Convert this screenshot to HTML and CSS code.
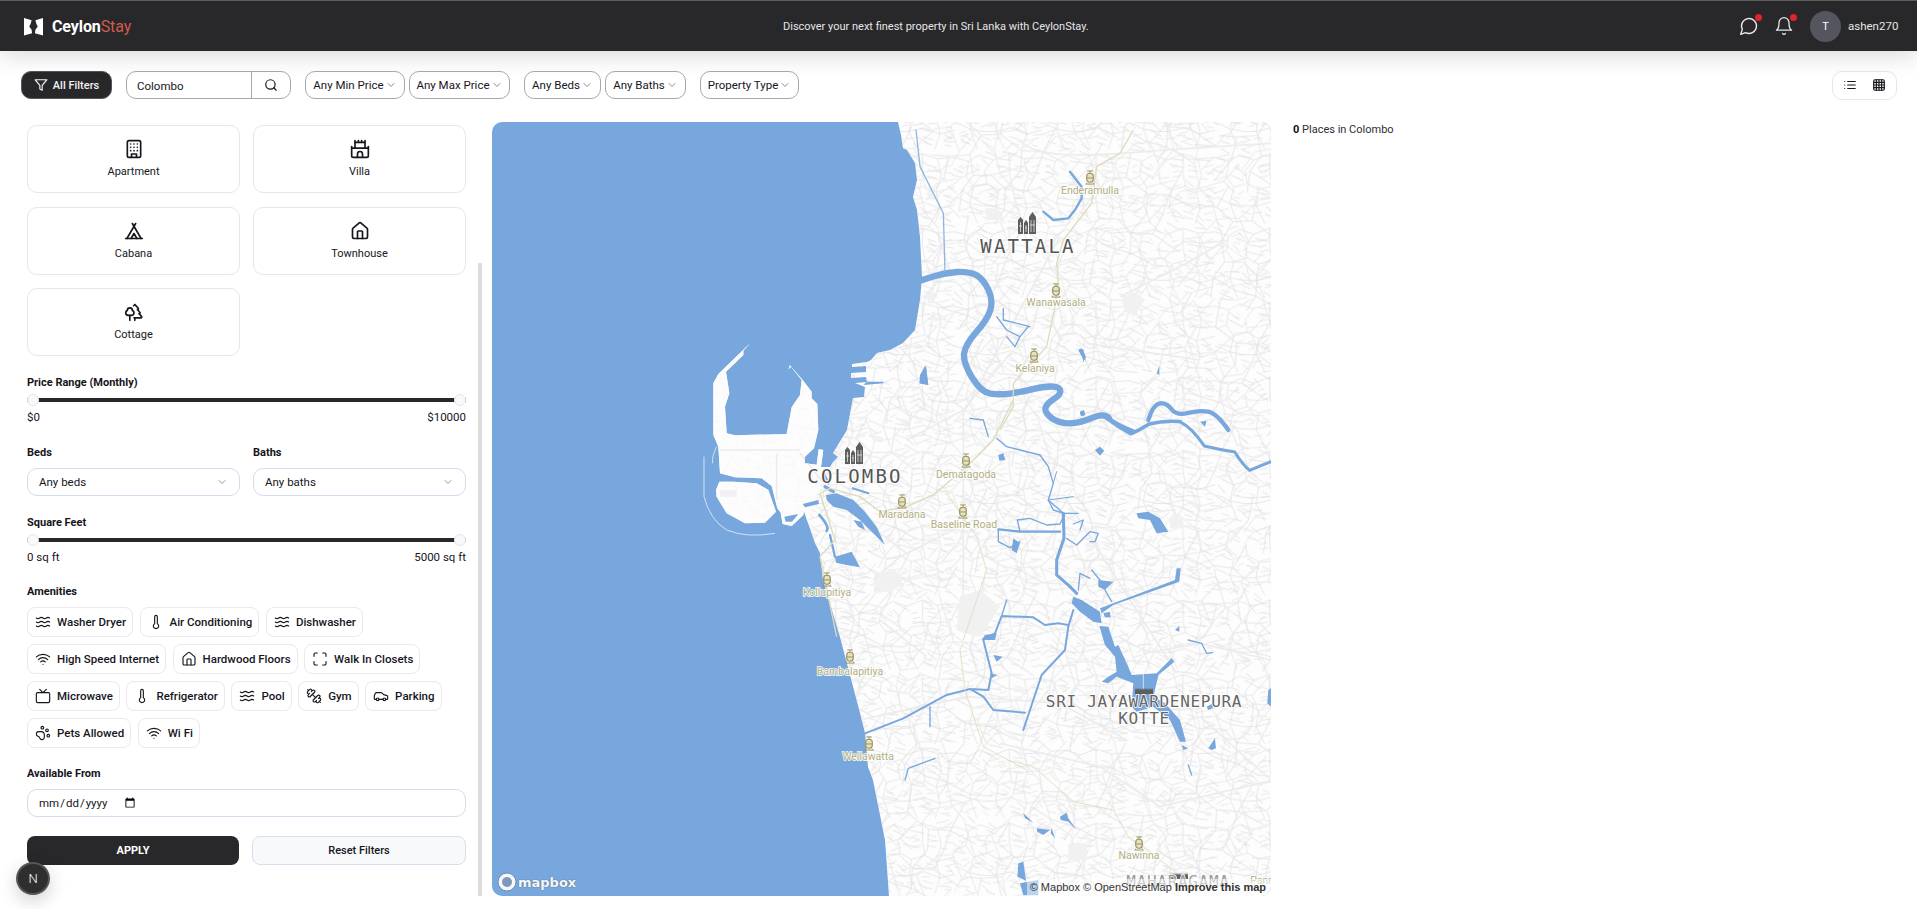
FILE: index.html
```html
<!DOCTYPE html>
<html lang="en">
<head>
<meta charset="utf-8">
<title>CeylonStay</title>
<link rel="stylesheet" href="styles.css">
</head>
<body>
<svg class="sprites" aria-hidden="true">
  <symbol id="i-waves" viewBox="0 0 24 24"><path d="M2 6c.6.5 1.2 1 2.5 1C7 7 7 5 9.5 5c2.6 0 2.4 2 5 2 2.5 0 2.5-2 5-2 1.3 0 1.9.5 2.5 1"/><path d="M2 12c.6.5 1.2 1 2.5 1 2.5 0 2.5-2 5-2 2.6 0 2.4 2 5 2 2.5 0 2.5-2 5-2 1.3 0 1.9.5 2.5 1"/><path d="M2 18c.6.5 1.2 1 2.5 1 2.5 0 2.5-2 5-2 2.6 0 2.4 2 5 2 2.5 0 2.5-2 5-2 1.3 0 1.9.5 2.5 1"/></symbol>
  <symbol id="i-thermo" viewBox="0 0 24 24"><path d="M14 4v10.54a4 4 0 1 1-4 0V4a2 2 0 0 1 4 0Z"/></symbol>
  <symbol id="i-wifi" viewBox="0 0 24 24"><path d="M12 20h.01"/><path d="M2 8.82a15 15 0 0 1 20 0"/><path d="M5 12.859a10 10 0 0 1 14 0"/><path d="M8.5 16.429a5 5 0 0 1 7 0"/></symbol>
  <symbol id="i-house" viewBox="0 0 24 24"><path d="M15 21v-8a1 1 0 0 0-1-1h-4a1 1 0 0 0-1 1v8"/><path d="M3 10a2 2 0 0 1 .709-1.528l7-5.999a2 2 0 0 1 2.582 0l7 5.999A2 2 0 0 1 21 10v9a2 2 0 0 1-2 2H5a2 2 0 0 1-2-2z"/></symbol>
  <symbol id="i-max" viewBox="0 0 24 24"><path d="M8 3H5a2 2 0 0 0-2 2v3"/><path d="M21 8V5a2 2 0 0 0-2-2h-3"/><path d="M3 16v3a2 2 0 0 0 2 2h3"/><path d="M16 21h3a2 2 0 0 0 2-2v-3"/></symbol>
  <symbol id="i-tv" viewBox="0 0 24 24"><rect x="2" y="7" width="20" height="15" rx="2"/><path d="m17 2-5 5-5-5"/></symbol>
  <symbol id="i-gym" viewBox="0 0 24 24"><path d="M14.4 14.4 9.6 9.6"/><path d="M18.657 21.485a2 2 0 1 1-2.829-2.828l-1.767 1.768a2 2 0 1 1-2.829-2.829l6.364-6.364a2 2 0 1 1 2.829 2.829l-1.768 1.767a2 2 0 1 1 2.828 2.829z"/><path d="m21.5 21.5-1.4-1.4"/><path d="M3.9 3.9 2.5 2.5"/><path d="M6.404 12.768a2 2 0 1 1-2.829-2.829l1.768-1.767a2 2 0 1 1-2.828-2.829l2.828-2.828a2 2 0 1 1 2.829 2.828l1.767-1.768a2 2 0 1 1 2.829 2.829z"/></symbol>
  <symbol id="i-car" viewBox="0 0 24 24"><path d="M19 17h2c.6 0 1-.4 1-1v-3c0-.9-.7-1.7-1.5-1.9C18.7 10.6 16 10 16 10s-1.3-1.4-2.2-2.3c-.5-.4-1.1-.7-1.8-.7H5c-.6 0-1.1.4-1.4.9l-1.4 2.9A3.7 3.7 0 0 0 2 12v4c0 .6.4 1 1 1h2"/><circle cx="7" cy="17" r="2"/><path d="M9 17h6"/><circle cx="17" cy="17" r="2"/></symbol>
  <symbol id="i-paw" viewBox="0 0 24 24"><circle cx="11" cy="4" r="2"/><circle cx="18" cy="8" r="2"/><circle cx="20" cy="16" r="2"/><path d="M9 10a5 5 0 0 1 5 5v3.5a3.5 3.5 0 0 1-6.84 1.045Q6.52 17.48 4.46 16.84A3.5 3.5 0 0 1 5.5 10Z"/></symbol>
  <symbol id="i-chev" viewBox="0 0 24 24"><path d="m6 9 6 6 6-6"/></symbol>
  <symbol id="i-building" viewBox="0 0 24 24"><rect x="4" y="2" width="16" height="20" rx="2"/><path d="M9 22v-4h6v4"/><path d="M8 6h.01M12 6h.01M16 6h.01M8 10h.01M12 10h.01M16 10h.01M8 14h.01M12 14h.01M16 14h.01"/></symbol>
  <symbol id="i-castle" viewBox="0 0 24 24"><path d="M22 20v-9H2v9a2 2 0 0 0 2 2h16a2 2 0 0 0 2-2Z"/><path d="M18 11V4H6v7"/><path d="M15 22v-4a3 3 0 0 0-3-3a3 3 0 0 0-3 3v4"/><path d="M22 11V9"/><path d="M2 11V9"/><path d="M6 4V2"/><path d="M18 4V2"/><path d="M10 4V2"/><path d="M14 4V2"/></symbol>
  <symbol id="i-tent" viewBox="0 0 24 24"><path d="M3.5 21 14 3"/><path d="M20.5 21 10 3"/><path d="M15.5 21 12 15l-3.5 6"/><path d="M2 21h20"/></symbol>
  <symbol id="i-trees" viewBox="0 0 24 24"><path d="M10 10v.2A3 3 0 0 1 8.9 16H5a3 3 0 0 1-1-5.8V10a3 3 0 0 1 6 0Z"/><path d="M7 16v6"/><path d="M13 19v3"/><path d="M12 19h8.3a1 1 0 0 0 .7-1.7L18 14h.3a1 1 0 0 0 .7-1.7L16 9h.2a1 1 0 0 0 .8-1.7L13 3l-1.4 1.5"/></symbol>
  <symbol id="tram" viewBox="0 0 12 16"><path class="tram-line" d="M3 1h6M6 1v2M2.5 13.5 1.500 15.500M9.500 13.500l1 2M2 15h8"/><rect class="tram-body" x="2.500" y="3.500" width="7" height="9.500" rx="3.200"/><path class="tram-band" d="M2.500 8.500h7"/></symbol>
  <symbol id="city" viewBox="0 0 19 22"><path class="city-fill" d="M0 22V8l2.500-3L5 8v14zM6 22V11l2-3 2 3v11zM11 22V5l3.500-5L18 5v17z"/><path class="city-win" d="M2.500 10v10M8 13v7M13 8v12M16 8v12M1 14h3M7 16h2M12 13h5"/></symbol>
  <symbol id="factory" viewBox="0 0 18 6"><path class="city-fill" d="M0 6V2l1-2 1 2 1-2 1 2 1-2 1 2 1-2 1 2 1-2 1 2 1-2 1 2 1-2 1 2 1-2 1 2 1-2 1 2v4z"/></symbol>
</svg>

<header class="topbar">
  <a class="brand">
    <svg class="brand-mark" viewBox="0 0 20 20"><path d="M0 1l8 2.500L7 7 5.500 10 8 13.500 8.500 17 0 19.500zM20 1l-8 2.500L13 7l1.500 3L12 13.500 11.500 17l8.500 2.500z"/></svg>
    <span class="brand-name">Ceylon<span class="brand-accent">Stay</span></span>
  </a>
  <p class="tagline">Discover your next finest property in Sri Lanka with CeylonStay.</p>
  <div class="user-area">
    <span class="notify"><svg class="ic ic-20" viewBox="0 0 24 24"><path d="M7.900 20A9 9 0 1 0 4 16.100L2 22Z"/></svg><i class="dot"></i></span>
    <span class="notify"><svg class="ic ic-20" viewBox="0 0 24 24"><path d="M6 8a6 6 0 0 1 12 0c0 7 3 9 3 9H3s3-2 3-9"/><path d="M10.300 21a1.940 1.940 0 0 0 3.400 0"/></svg><i class="dot"></i></span>
    <span class="avatar">T</span>
    <span class="username">ashen270</span>
  </div>
</header>

<section class="toolbar">
  <button class="all-filters"><svg class="ic ic-14" viewBox="0 0 24 24"><path d="M22 3H2l8 9.460V19l4 2v-8.540z"/></svg>All Filters</button>
  <div class="search"><span class="search-text">Colombo</span><span class="search-btn"><svg class="ic ic-14" viewBox="0 0 24 24"><circle cx="11" cy="11" r="8"/><path d="m21 21-4.300-4.300"/></svg></span></div>
  <div class="pill-group">
    <button class="pill pill-min">Any Min Price<svg class="ic chev"><use href="#i-chev"/></svg></button>
    <button class="pill pill-max">Any Max Price<svg class="ic chev"><use href="#i-chev"/></svg></button>
  </div>
  <div class="pill-group">
    <button class="pill pill-beds">Any Beds<svg class="ic chev"><use href="#i-chev"/></svg></button>
    <button class="pill pill-baths">Any Baths<svg class="ic chev"><use href="#i-chev"/></svg></button>
  </div>
  <button class="pill pill-type">Property Type<svg class="ic chev"><use href="#i-chev"/></svg></button>
  <div class="view-toggle">
    <svg class="ic ic-14" viewBox="0 0 24 24"><path d="M3 6h.01M3 12h.01M3 18h.01M8 6h13M8 12h13M8 18h13"/></svg>
    <svg class="ic ic-14" viewBox="0 0 24 24"><rect x="3" y="3" width="18" height="18" rx="2"/><path d="M3 7.500h18M3 12h18M3 16.500h18M7.500 3v18M12 3v18M16.500 3v18"/></svg>
  </div>
</section>

<main class="content">
  <aside class="sidebar">
    <div class="scrollbar"></div>
    <div class="types">
      <button class="type-card"><svg class="ic ic-20"><use href="#i-building"/></svg>Apartment</button>
      <button class="type-card"><svg class="ic ic-20"><use href="#i-castle"/></svg>Villa</button>
      <button class="type-card"><svg class="ic ic-20"><use href="#i-tent"/></svg>Cabana</button>
      <button class="type-card"><svg class="ic ic-20"><use href="#i-house"/></svg>Townhouse</button>
      <button class="type-card"><svg class="ic ic-20"><use href="#i-trees"/></svg>Cottage</button>
    </div>

    <h3 class="label label-section">Price Range (Monthly)</h3>
    <div class="slider"><i class="thumb"></i><i class="thumb"></i></div>
    <div class="range-values"><span>$0</span><span>$10000</span></div>

    <div class="two-col section-gap">
      <div><h3 class="label">Beds</h3><div class="select"><span>Any beds</span><svg class="ic chev select-chev"><use href="#i-chev"/></svg></div></div>
      <div><h3 class="label">Baths</h3><div class="select"><span>Any baths</span><svg class="ic chev select-chev"><use href="#i-chev"/></svg></div></div>
    </div>

    <h3 class="label label-section">Square Feet</h3>
    <div class="slider"><i class="thumb"></i><i class="thumb"></i></div>
    <div class="range-values"><span>0 sq ft</span><span>5000 sq ft</span></div>

    <h3 class="label label-section">Amenities</h3>
    <div class="chips">
      <div class="chip-row">
        <span class="chip"><svg class="ic ic-16"><use href="#i-waves"/></svg>Washer Dryer</span>
        <span class="chip"><svg class="ic ic-16"><use href="#i-thermo"/></svg>Air Conditioning</span>
        <span class="chip"><svg class="ic ic-16"><use href="#i-waves"/></svg>Dishwasher</span>
      </div>
      <div class="chip-row">
        <span class="chip"><svg class="ic ic-16"><use href="#i-wifi"/></svg>High Speed Internet</span>
        <span class="chip"><svg class="ic ic-16"><use href="#i-house"/></svg>Hardwood Floors</span>
        <span class="chip"><svg class="ic ic-16"><use href="#i-max"/></svg>Walk In Closets</span>
      </div>
      <div class="chip-row">
        <span class="chip"><svg class="ic ic-16"><use href="#i-tv"/></svg>Microwave</span>
        <span class="chip"><svg class="ic ic-16"><use href="#i-thermo"/></svg>Refrigerator</span>
        <span class="chip"><svg class="ic ic-16"><use href="#i-waves"/></svg>Pool</span>
        <span class="chip"><svg class="ic ic-16"><use href="#i-gym"/></svg>Gym</span>
        <span class="chip"><svg class="ic ic-16"><use href="#i-car"/></svg>Parking</span>
      </div>
      <div class="chip-row">
        <span class="chip"><svg class="ic ic-16"><use href="#i-paw"/></svg>Pets Allowed</span>
        <span class="chip"><svg class="ic ic-16"><use href="#i-wifi"/></svg>Wi Fi</span>
      </div>
    </div>

    <h3 class="label label-section label-date">Available From</h3>
    <input class="date" type="date">

    <div class="two-col actions">
      <button class="btn-apply">APPLY</button>
      <button class="btn-reset">Reset Filters</button>
    </div>
  </aside>

  <section class="map">
    <svg class="map-svg" viewBox="492 122 779 774" role="img" aria-label="Map of Colombo">
      <defs>
        <path id="land-main" d="M898 122L901 135 903 148 907 150 915 163 917 180 913 197 917 210 920 237 922 277 920 300 915 330 903 343 890 350 877 353 871 360 867 362 852 364 852 367 866 366 866 372 851 373 851 378 866 377 867 382 855 383 865 387 864 397 853 398 847 430 833 453 838 457 833 462 830 467 818 467 802 505 807 520 815 543 820 553 823 580 840 637 860 713 865 733 868 767 873 780 885 840 889 896H1271V122Z"/>
        <path id="port" d="M182 38L160 62 160 75 108 125 118 190 105 230 110 310 135 316 290 312 305 232 330 195 335 150 303 110 295 118 300 106 338 150 365 185 365 205 382 222 385 300 372 355 345 380 345 400 380 404 386 358 400 360 393 412 400 470 345 525 272 548 262 535 245 468 215 445 135 442 90 430 85 350 70 315 70 160 85 132ZM88 455L130 455 200 460 235 480 258 545 225 578 165 580 110 550 80 500 78 480ZM272 548L278 582 305 588 340 555 345 525Z"/>
        <clipPath id="land-clip">
          <use href="#land-main"/>
          <use href="#port" transform="translate(690 330) scale(.3333)"/>
        </clipPath>
        <pattern id="streets-a" width="140" height="120" patternUnits="userSpaceOnUse" patternTransform="scale(.62)">
          <path class="street" d="M0 14L22 20 40 10 62 18 88 8 112 16 140 14M22 20L18 44 30 62 24 88 36 120M18 44L4 50 0 48M30 62L52 56 70 66 92 60 110 70 140 62M52 56L48 36 62 18M70 66L66 92 80 120M92 60L88 38 88 8M110 70L116 96 108 120M112 16L118 42 110 70M24 88L46 92 66 92 90 86 116 96 140 90M0 78L12 82 24 88M6 30l8-4M6 36l9 3M30 30l10 4M34 24l6 6M44 44l8-4M70 30l10-3M72 38l12-3M72 46l14-3M96 26l14 4M96 34l18 3M96 44l14 3M36 74l10-6M40 80l-10-2M56 76l8 3M54 84l10-3M76 74l10 4M74 82l14-2M94 72l12 4M96 80l14-1M124 78l10-3M126 84l10 2M124 30l12-4M124 38l14 2M128 50l-10-2M8 100l14-4M10 108l14 4M42 100l16 6M44 108l10 8M62 104l14-2M88 100l18 6M90 110l14 4M122 106l14-4M124 114l10 2"/>
        </pattern>
        <pattern id="streets-b" width="190" height="160" patternUnits="userSpaceOnUse" patternTransform="rotate(19) scale(.7)">
          <path class="street" d="M0 40L30 34 58 46 84 36 120 48 150 40 190 46M30 34L36 0M84 36L78 0M150 40L156 0M58 46L52 78 66 104 58 130 64 160M120 48L128 76 116 108 124 136 118 160M0 96L24 90 52 78M66 104L92 96 116 108 146 100 190 112M146 100L150 70 150 40M24 90L28 122 14 160M58 130L92 138 124 136 160 142 190 134M8 54l12 6M8 62l14 4M10 72l16-4M36 54l12 4M34 62l14 2M70 58l14 6M72 66l18 2M68 76l14 8M92 70l20-4M92 80l24-2M96 58l20-2M136 60l-8 4M160 56l18 6M162 66l20-2M160 78l22 4M160 88l14 8M70 118l20-8M74 126l-8-6M94 110l16 8M94 120l18 4M132 116l12-4M132 126l14 4M160 120l16-4M36 104l14 2M36 114l16-2M36 130l16 6M34 144l20 2M74 148l22 2M76 156l20-4M134 150l20-4M136 158l22-2M8 112l14 4M4 128l16-2M6 144l12 2M44 14l14 4M46 24l20-2M96 10l16 6M98 20l24 4M128 22l14-6M166 12l14 6M168 24l18 2M8 12l14 4M8 22l16 2"/>
        </pattern>
        <pattern id="streets-c" width="106" height="134" patternUnits="userSpaceOnUse" patternTransform="rotate(-28) scale(.8)">
          <path class="street street-light" d="M0 20L20 28 48 18 74 30 106 22M48 18L52 0M48 18L42 50 56 78 48 108 54 134M74 30L70 62 56 78M70 62L92 70 106 64M20 28L16 60 0 70M16 60L42 50M48 108L24 100 0 112M48 108L78 114 106 104M78 114L84 134M10 38l8 2M26 40l10 2M24 48l12-2M56 36l12 2M54 46l14 2M8 80l16 4M10 90l18 2M62 88l18-6M64 98l18-4M86 84l14 4M88 94l16-2M60 122l14 2M20 118l16 4M22 128l18-2"/>
        </pattern>
      </defs>

      <rect class="sea" x="492" y="122" width="779" height="774"/>
      <use class="land" href="#land-main"/>
      <g transform="translate(690 330) scale(.3333)">
        <use class="land" href="#port"/>
        <path class="breakwater" d="M42 380V500Q60 570 110 600 170 625 255 610M80 350Q65 380 68 400"/>
      </g>

      <g clip-path="url(#land-clip)">
        <rect class="streets streets-a" x="492" y="122" width="779" height="774"/>
        <rect class="streets streets-b" x="492" y="122" width="779" height="774"/>
        <rect class="streets streets-c" x="492" y="122" width="779" height="774"/>
        <path class="port-wash" transform="translate(690 330) scale(.3333)" d="M60 30H380L400 360 393 460 345 600H60Z"/>
        <g transform="translate(900 130) scale(.3333)">
          <path class="main-road" d="M360 30Q400 90 660 70T1113 40M480 320L190 850M660 500L860 400 980 330M560 640L900 690M690 490Q720 530 700 550"/>
          <path class="park" d="M255 235h40l10 35h-45zM665 500l40-15 30 25-30 45-30-10zM75 490h30v30H85zM760 388h10v14h-10z"/>
        </g>
        <g transform="translate(720 340) scale(.3333)">
          <path class="main-road" d="M730 210V880M540 650L760 540 800 450M0 330H240M170 340V480M240 340L350 480 560 640M730 210L880 30M560 300L730 210M460 720L540 650"/>
          <path class="park" d="M460 720l60-35 30 35-30 30-50 10zM720 770l60-20 60 50-60 90-50-30zM0 450h50v20H0z"/>
        </g>
        <g transform="translate(860 500) scale(.3333)">
          <path class="main-road" d="M620 0L950 520M320 590L600 610 800 720M60 360L200 470M0 660L320 590"/>
          <path class="park" d="M60 215l50 0 20 40-50 20-40-20zM300 290l60-10 40 50-50 80-60-20zM930 50h40v35h-40z"/>
        </g>
        <g transform="translate(1000 620) scale(.3333)">
          <path class="main-road" d="M0 370L300 440 480 560 820 480M430 100L600 70 813 120M600 290L813 480"/>
          <path class="park" d="M205 670h55v50h-55z"/>
        </g>
      </g>

      <g transform="translate(690 330) scale(.3333)">
        <path class="water" d="M283 560L287 575 306 575 325 552ZM338 522L385 510 387 522 345 532ZM408 495L440 490 490 510 525 545 560 590 585 645 555 615 530 590 510 570 470 540 430 530 410 510ZM530 155L580 155 580 160 520 165ZM690 160L708 105 715 165ZM490 570L515 575 525 600 505 590Z"/>
        <path class="river" stroke-width="8" d="M403 435L415 460M388 555Q420 590 410 603"/>
        <path class="river" stroke-width="9" d="M405 470L430 485"/>
        <path class="river" stroke-width="6" d="M488 475L535 490"/>
      </g>
      <g transform="translate(720 340) scale(.3333)">
        <path class="water" d="M345 650L395 635 420 682 380 675 348 668ZM1125 330L1140 320 1153 332 1140 347ZM1080 215L1092 210 1096 225 1083 228ZM835 345L850 340 856 360 838 362ZM1075 30L1090 28 1098 62 1085 48Z"/>
        <path class="river" stroke-width="7" d="M330 585L345 650"/>
        <path class="river" stroke-width="4" d="M750 235L790 240 805 290M830 295L860 320 960 345 985 380 1000 430 985 480 1030 520"/>
        <path class="river" stroke-width="3" d="M1000 430L1010 395M985 480L1060 470"/>
      </g>
      <g transform="translate(900 130) scale(.3333)">
        <path class="river" stroke-width="19" stroke-linecap="butt" d="M60 452L97 440Q135 428 172 426 210 425 230 436 250 448 265 479 280 510 271 540 262 570 228 607 195 645 192 672 190 700 217 744 245 788 272 791 300 795 335 790 370 785 405 776 440 768 460 770 480 772 481 783 482 795 460 808 438 822 436 836 435 850 456 865 478 880 509 880 540 880 576 864 612 848 626 864"/>
        <path class="river" stroke-width="14" d="M626 864Q640 880 700 905"/>
        <path class="river" stroke-width="13" d="M745 870Q760 822 780 820 800 818 815 838 830 858 865 849 900 840 925 845 950 850 985 900"/>
        <path class="river river-canal" stroke-width="4" d="M48 0L60 110 130 250 135 425"/>
        <path class="river" stroke-width="7" d="M510 125L545 170 545 205 525 240 505 265 460 270 430 245"/>
        <path class="river" stroke-width="4" d="M290 560L320 600 360 620 345 650 320 620M310 535L310 570 390 590M360 620L385 590"/>
        <path class="water" d="M60 735L75 708 85 765 58 760ZM535 660L545 655 558 680 550 695 545 675ZM770 730L778 708 778 735ZM900 875L920 872 915 890ZM540 845L552 845 552 858 542 856Z"/>
      </g>
      <g transform="scale(1.2226 1.2218)">
        <path class="river" stroke-width="2.500" d="M965 345Q975 350 985 365 998 368 1010 370 1016 380 1022 385L1039 378"/>
        <path class="river" stroke-width="3" d="M905 342Q915 350 925 355 932 352 940 347 952 344 965 345"/>
      </g>
      <g transform="translate(860 500) scale(.3333)">
        <path class="river" stroke-width="7" d="M415 88L480 95 600 95"/>
        <path class="river" stroke-width="4" d="M415 88L415 125 450 143 480 125M480 95L472 60 510 55 560 75 600 72 615 40 655 40M620 115L650 135 690 95 715 100 705 125 690 125M640 72L670 60 660 90M565 0L580 30 612 40M655 270L660 220 690 235M695 210L720 240M735 270L755 305M985 420L1025 430 1040 460 1058 458M985 795L995 825M440 300L425 348"/>
        <path class="river" stroke-width="9" d="M610 40L612 115 590 180 590 225 630 260 650 280"/>
        <path class="river" stroke-width="6" d="M640 330L625 380 615 450 545 525 490 690M625 375L595 370 555 375 520 352 425 348 405 400 370 420 395 520 385 570 330 567 260 585 130 655 15 700M330 567L370 590 400 630 495 638"/>
        <path class="river" stroke-width="4" d="M210 620V680M135 840L145 805 225 775"/>
        <path class="water" d="M460 115L480 130 470 160 455 150ZM720 325L945 240 950 205 962 205 958 245 760 315 725 340ZM640 290L665 300 720 335 725 370 700 365 660 335 635 310ZM718 378L745 380 765 440 775 435 805 500 815 525 890 520 935 475 943 485 895 527 880 590 915 610 960 660 978 725 960 725 930 660 880 620 830 635 815 620 820 550 770 530 745 550 725 545 745 530 770 515 765 470 735 435ZM830 40L865 35 900 55 925 95 890 100 870 60 835 55ZM365 420L375 405 410 400 405 420ZM715 240L760 245 735 270 715 260ZM1045 745L1065 715 1068 745 1055 750ZM1040 620L1060 610 1058 625 1045 630ZM1225 570L1233 565 1233 620 1222 610ZM965 735L985 745 970 750ZM945 390L958 378 958 395ZM400 465L428 470 410 485ZM390 520L412 525 395 535ZM730 340L750 335 752 352 735 352Z"/>
        <path class="gap" d="M850 522V572M895 525L935 495"/>
      </g>
      <g transform="translate(1000 620) scale(.3333)">
        <path class="water" d="M70 580L100 608 75 595ZM110 625L150 630 130 645 112 635ZM155 625L165 655 152 640ZM180 590L200 578 205 595 230 630 205 605 182 600ZM55 730L70 725 78 782 52 770ZM60 790L115 780 115 826 70 826Z"/>
      </g>

      <g transform="translate(900 130) scale(.3333)">
        <path class="rail" d="M700 0L660 70 590 110 575 220 490 330 470 400 475 450 465 530 440 650 340 760 340 830 300 900"/>
      </g>
      <g transform="translate(720 340) scale(.3333)">
        <path class="rail" d="M880 180L820 300 740 380 640 465 560 500 480 515 420 470 330 445 300 460 345 600 300 650 350 890"/>
        <path class="rail rail-thin" d="M680 460L770 590 800 690 730 900"/>
      </g>
      <g transform="translate(860 500) scale(.3333)">
        <path class="rail rail-thin" d="M310 430L300 450 315 570 370 740 500 810"/>
      </g>
      <g transform="translate(1000 620) scale(.3333)">
        <path class="rail rail-thin" d="M20 420L100 440 220 545 340 570 385 650 520 750"/>
      </g>

      <use href="#city" x="1018" y="212" width="19" height="22"/>
      <use href="#city" x="845" y="442" width="19" height="22"/>
      <use href="#factory" x="1135" y="688" width="18" height="6"/>
      <use href="#factory" x="1170" y="873" width="18" height="6"/>

      <text class="city-label" x="1028" y="253">WATTALA</text>
      <text class="city-label" x="855" y="483">COLOMBO</text>
      <text class="city-label city-label-small" x="1144" y="707">SRI JAYAWARDENEPURA</text>
      <text class="city-label city-label-small" x="1144" y="724">KOTTE</text>
      <text class="city-label city-label-small city-label-faint" x="1178" y="887">MAHARAGAMA</text>

      <use href="#tram" x="1084" y="170" width="12" height="15"/>
      <use href="#tram" x="1050" y="283" width="12" height="15"/>
      <use href="#tram" x="1028" y="348" width="12" height="15"/>
      <use href="#tram" x="960" y="453" width="12" height="15"/>
      <use href="#tram" x="896" y="494" width="12" height="15"/>
      <use href="#tram" x="957" y="504" width="12" height="15"/>
      <use href="#tram" x="821" y="572" width="12" height="15"/>
      <use href="#tram" x="844" y="649" width="12" height="15"/>
      <use href="#tram" x="863" y="736" width="12" height="15"/>
      <use href="#tram" x="1133" y="836" width="12" height="15"/>

      <text class="station" x="1090" y="194">Enderamulla</text>
      <text class="station" x="1056" y="306">Wanawasala</text>
      <text class="station" x="1035" y="372">Kelaniya</text>
      <text class="station" x="966" y="478">Dematagoda</text>
      <text class="station" x="902" y="518">Maradana</text>
      <text class="station" x="964" y="528">Baseline Road</text>
      <text class="station" x="827" y="596">Kollupitiya</text>
      <text class="station" x="850" y="675">Bambalapitiya</text>
      <text class="station" x="868" y="760">Wellawatta</text>
      <text class="station" x="1139" y="859">Nawinna</text>
      <text class="station" x="1276" y="884">Pannipitiya</text>
    </svg>
    <div class="mapbox-logo"><svg class="mapbox-mark" viewBox="0 0 20 20"><circle class="mapbox-ring" cx="10" cy="10" r="9"/><circle class="mapbox-core" cx="10" cy="10" r="5"/></svg><span>mapbox</span></div>
    <div class="attribution">© Mapbox © OpenStreetMap <b>Improve this map</b></div>
  </section>

  <section class="results"><b>0</b> Places in Colombo</section>
</main>

<div class="next-badge">N</div>
</body>
</html>
```

FILE: styles.css
```css
* { box-sizing: border-box; }
html, body { margin: 0; height: 100%; }
body {
  font-family: Roboto, "Noto Sans", sans-serif;
  font-size: 11.500px;
  color: #16161d;
  background: #fff;
  overflow: hidden;
  position: relative;
}
button { font: inherit; color: inherit; background: none; cursor: pointer; }
h3, p { margin: 0; }
.sprites { position: absolute; width: 0; height: 0; }

.ic { fill: none; stroke: currentColor; stroke-width: 2; stroke-linecap: round; stroke-linejoin: round; flex: none; }
.ic-14 { width: 14px; height: 14px; }
.ic-16 { width: 16px; height: 16px; }
.ic-20 { width: 20px; height: 20px; }
.chev { width: 12px; height: 12px; stroke-width: 1.500; color: #66666e; }

/* header */
.topbar {
  height: 51px;
  display: flex;
  align-items: center;
  padding: 0 23px 0 24px;
  background: #28282a;
  border-top: 1px solid #5c5c5c;
  color: #eee;
  box-shadow: 0 4px 24px rgba(0, 0, 0, .16);
  position: relative;
}
.brand { display: flex; align-items: center; gap: 9px; width: 759px; }
.brand-mark { width: 19px; height: 19px; fill: #fff; }
.brand-name { font-size: 16px; font-weight: 700; color: #fff; letter-spacing: -.1px; }
.brand-accent { font-weight: 400; color: #cf5a52; }
.tagline { font-size: 11px; color: #e6e6e6; white-space: nowrap; }
.user-area { margin-left: auto; display: flex; align-items: center; }
.notify { position: relative; display: flex; margin-right: 15px; color: #e8e8e8; }
.notify .ic { stroke-width: 1.600; }
.dot { position: absolute; top: -2px; right: -3px; width: 7px; height: 7px; border-radius: 50%; background: #e0242a; }
.avatar {
  width: 31px; height: 31px; border-radius: 50%;
  background: #55555f; color: #fff;
  display: flex; align-items: center; justify-content: center;
  font-size: 11px; margin-left: 1px;
}
.username { margin-left: 7px; width: 46px; font-size: 11.500px; color: #e6e6e6; white-space: nowrap; }

/* toolbar */
.toolbar {
  display: flex;
  align-items: center;
  height: 28px;
  margin-top: 20px;
  padding: 0 20px 0 21px;
  gap: 14px;
}
.all-filters {
  height: 28px; width: 91px;
  display: flex; align-items: center; justify-content: center; gap: 5px;
  background: #28282a; color: #f2f2f2;
  border: 1px solid #55555a; border-radius: 10px;
  font-weight: 500; font-size: 11px; padding: 0;
}
.search {
  width: 165px; height: 28px;
  display: flex;
  border: 1px solid #a8a8b2; border-radius: 10px;
}
.search-text { flex: 1; padding-left: 10px; line-height: 28px; }
.search-btn { width: 39px; border-left: 1px solid #a8a8b2; display: flex; align-items: center; justify-content: center; }
.pill-group { display: flex; gap: 4px; }
.pill {
  height: 28px;
  display: inline-flex; align-items: center; justify-content: center; gap: 1px;
  padding: 0;
  background: #fff;
  border: 1px solid #a8a8b2; border-radius: 10px;
  white-space: nowrap;
}
.pill-min { width: 100px; }
.pill-max { width: 101px; }
.pill-beds { width: 77px; }
.pill-baths { width: 81px; }
.pill-type { width: 99px; }
.view-toggle {
  margin-left: auto;
  width: 65px; height: 29px;
  display: flex; align-items: center; justify-content: space-around;
  padding: 0 3px;
  border: 1px solid #e2e8f0; border-radius: 10px;
}

/* layout */
.content { display: flex; height: 774px; margin-top: 23px; }
.sidebar { width: 492px; flex: none; padding: 3px 26px 0 27px; position: relative; }
.scrollbar { position: absolute; left: 478px; top: 141px; bottom: 0; width: 4px; background: #dcdcdc; }

.types { display: grid; grid-template-columns: 213px 213px; grid-auto-rows: 68px; gap: 13.500px 13px; }
.type-card {
  display: flex; flex-direction: column; align-items: center; gap: 6px;
  padding: 13px 0 0;
  background: #fff;
  border: 1px solid #e6e6ec; border-radius: 10px;
  font-size: 11px;
}

.label { font-weight: 700; font-size: 11px; line-height: 16px; color: #14141a; }
.label-section { margin-top: 19px; }
.label-date { margin-top: 18px; }
.slider {
  height: 12px; margin-top: 3px;
  display: flex; justify-content: space-between; align-items: center;
  background: linear-gradient(#28282a, #28282a) center / 100% 4px no-repeat;
}
.thumb { width: 12px; height: 12px; border-radius: 50%; background: #f8f9fb; border: 1px solid #e4e6ee; }
.range-values { display: flex; justify-content: space-between; line-height: 16px; margin-top: 3px; }

.two-col { display: grid; grid-template-columns: 213px 213px; gap: 13px; }
.section-gap { margin-top: 20px; }
.select {
  height: 28px; margin-top: 7px;
  display: flex; align-items: center; justify-content: space-between;
  padding: 0 11px;
  border: 1px solid #d3dcec; border-radius: 10px;
}
.select-chev { color: #77777f; }

.chips { display: flex; flex-direction: column; gap: 7px; margin-top: 7px; }
.chip-row { display: flex; gap: 6.500px; }
.chip {
  height: 30px;
  display: inline-flex; align-items: center; gap: 6px;
  padding: 0 6px 0 7px;
  border: 1px solid #e9e9ef; border-radius: 8px;
  font-weight: 500;
  white-space: nowrap;
}
.chip .ic { stroke-width: 1.700; }

.date {
  display: block; width: 100%; height: 28px; margin-top: 7px;
  padding: 0 10px;
  border: 1px solid #d3dcec; border-radius: 10px;
  font: inherit; color: #16161d; background: #fff;
}
.date::-webkit-datetime-edit { flex: 0 0 auto; }
.date::-webkit-calendar-picker-indicator { margin-left: -4px; margin-right: auto; }
.actions { margin-top: 19px; grid-template-columns: 212px 214px; }
.btn-apply, .btn-reset { height: 29px; border-radius: 8px; font-size: 11px; font-weight: 500; padding: 0; }
.btn-apply { background: #28282a; color: #fff; border: 0; font-weight: 700; }
.btn-reset { background: #f8f9fb; border: 1px solid #d8deec; }

/* map */
.map { width: 779px; flex: none; position: relative; border-radius: 10px; overflow: hidden; }
.map-svg { display: block; width: 100%; height: 100%; }
.sea { fill: #78a7dd; }
.land { fill: #fdfdfd; }
.streets { stroke: none; }
.streets-a { fill: url(#streets-a); }
.streets-b { fill: url(#streets-b); }
.streets-c { fill: url(#streets-c); }
.street { fill: none; stroke: #dedede; stroke-width: 1.100; }
.street-light { stroke: #e6e6e6; }
.port-wash { fill: #fdfdfd; opacity: .82; }
.main-road { fill: none; stroke: #ececec; stroke-width: 5; }
.park { fill: #f1f1f1; }
.breakwater { fill: none; stroke: #fff; stroke-width: 2; }
.water { fill: #78a7dd; }
.river { fill: none; stroke: #78a7dd; stroke-linejoin: round; stroke-linecap: round; }
.river-canal { stroke: #8fb6e3; }
.gap { fill: none; stroke: #fff; stroke-width: 2; }
.rail { fill: none; stroke: #dcdcbe; stroke-width: 4; stroke-linejoin: round; }
.rail-thin { stroke-width: 2.500; }
.city-fill { fill: #5e5e5e; }
.city-win { fill: none; stroke: #e8e8e8; stroke-width: .8; }
.tram-line { fill: none; stroke: #97905a; stroke-width: 1; }
.tram-body { fill: #e5e2c4; stroke: #97905a; stroke-width: 1.200; }
.tram-band { stroke: #97905a; stroke-width: 1; }
.city-label {
  font-family: "DejaVu Sans Mono", "Liberation Mono", monospace;
  font-size: 19px;
  letter-spacing: 2.200px;
  text-anchor: middle;
  fill: #555;
  stroke: #fff; stroke-width: 2px; paint-order: stroke;
}
.city-label-small { font-size: 16px; letter-spacing: .7px; fill: #666; stroke-width: 1.500px; }
.city-label-faint { fill: #999; }
.station {
  font-family: Roboto, "Noto Sans", sans-serif;
  font-size: 10.500px;
  text-anchor: middle;
  fill: #b1ae80;
  stroke: #fff; stroke-width: 1.500px; paint-order: stroke;
}
.mapbox-logo {
  position: absolute; left: 5px; bottom: 4px;
  display: flex; align-items: center; gap: 1px;
  color: #fff; font-family: "DejaVu Sans", sans-serif; font-weight: 700; font-size: 13px;
  text-shadow: 0 0 1px #5a6a7c, 0 0 1px #5a6a7c;
  opacity: .92;
}
.mapbox-mark { width: 20px; height: 20px; }
.mapbox-ring { fill: #fff; stroke: #6d8cb0; stroke-width: 1; }
.mapbox-core { fill: #7f98b6; }
.attribution {
  position: absolute; right: 0; bottom: 0;
  height: 17px; padding: 0 5px 0 3px;
  font-family: "Liberation Sans", Arial, sans-serif; font-size: 11px; line-height: 17px;
  color: #333;
  background: rgba(255, 255, 255, .5);
  white-space: nowrap;
}

.results { padding: 0 0 0 22px; font-size: 11px; line-height: 16px; color: #2e2e36; }
.results b { color: #111; }

.next-badge {
  position: absolute; left: 16px; top: 862px;
  width: 34px; height: 33px; border-radius: 50%;
  background: #2e2e2e; color: #fff;
  border: 2px solid #555;
  display: flex; align-items: center; justify-content: center;
  font-size: 13px; font-weight: 300;
  box-shadow: 0 6px 18px rgba(0, 0, 0, .18);
}
```
